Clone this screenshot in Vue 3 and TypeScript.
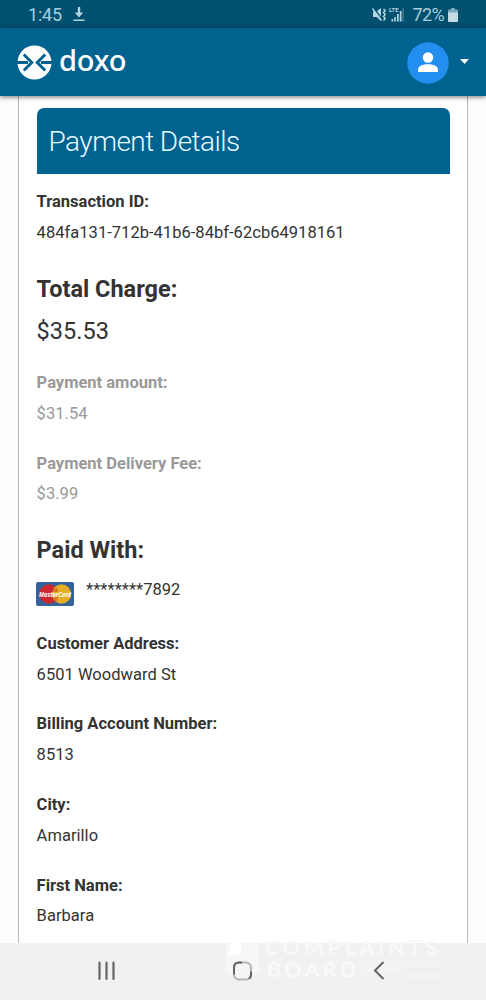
<script setup lang="ts">
interface Field {
  label: string
  value: string
  kind?: 'total' | 'muted' | 'card'
}

const fields: Field[] = [
  { label: 'Transaction ID:', value: '484fa131-712b-41b6-84bf-62cb64918161' },
  { label: 'Total Charge:', value: '$35.53', kind: 'total' },
  { label: 'Payment amount:', value: '$31.54', kind: 'muted' },
  { label: 'Payment Delivery Fee:', value: '$3.99', kind: 'muted' },
  { label: 'Paid With:', value: '********7892', kind: 'card' },
  { label: 'Customer Address:', value: '6501 Woodward St' },
  { label: 'Billing Account Number:', value: '8513' },
  { label: 'City:', value: 'Amarillo' },
  { label: 'First Name:', value: 'Barbara' },
]
</script>

<template>
  <div class="phone">
    <div class="status">
      <span class="time">1:45</span>
      <svg class="download" width="12" height="16" viewBox="0 0 12 16">
        <path d="M4.8 0h2.4v5.500h3L6 10.500 1.800 5.500h3z M0.500 12.500h11V14H.5z" fill="#b6d4e1" />
      </svg>
      <svg class="signals" width="33" height="16" viewBox="0 0 33 16">
        <g fill="#b6d4e1">
          <path d="M1 4.500h3.500L9 1v13l-4.500-4H1z" />
          <path d="M1.500 .5 9.500 11.500" stroke="#00506f" stroke-width="1.300" />
          <path d="M.5 1.500 9.500 13.500" stroke="#b6d4e1" stroke-width="1.300" />
          <path d="M11.500 2l1.700 1.500-1.700 2 1.700 2-1.700 2 1.700 2-1.700 2" fill="none" stroke="#b6d4e1" stroke-width="1.500" />
          <path d="M19.500 12h1.700v2.500h-1.700z M22.200 10h1.700v4.500h-1.700z M25 7h1.700v7.500H25z M27.800 4h1.700v10.500h-1.700z" />
          <path d="M30.500 1.500h1.300v13h-1.300z" opacity=".4" />
          <text x="17" y="5.200" font-size="6" font-weight="700" textLength="9.500" lengthAdjust="spacingAndGlyphs">LTE</text>
        </g>
      </svg>
      <span class="percent">72%</span>
      <svg class="battery" width="10" height="14" viewBox="0 0 10 14">
        <path d="M3 0h4v1.500h2q1 0 1 1V5H0V2.500q0-1 1-1h2z" fill="#78a9bd" />
        <path d="M0 4.500h10V13q0 1-1 1H1q-1 0-1-1z" fill="#c5dce6" />
      </svg>
    </div>

    <header class="navbar">
      <svg class="mark" width="35" height="35" viewBox="0 0 35 35">
        <circle cx="17.500" cy="17.500" r="17" fill="#fff" />
        <g stroke="#00628f" stroke-width="2.900" fill="none">
          <path d="M0 17.500h11M6.800 9.500l8 8-8 8" />
          <path d="M35 17.500H24M28.200 9.500l-8 8 8 8" />
        </g>
      </svg>
      <span class="brand">doxo</span>
      <svg class="avatar" width="42" height="42" viewBox="0 0 42 42">
        <circle cx="21" cy="21" r="20.700" fill="#218ef0" />
        <circle cx="21" cy="15.500" r="5.200" fill="#fff" />
        <path d="M11 30v-2.500c0-3.300 5-5.200 10-5.200s10 1.900 10 5.200V30z" fill="#fff" />
      </svg>
      <svg class="caret" width="9" height="5" viewBox="0 0 9 5"><path d="M0 0h9L4.500 5z" fill="#fff" /></svg>
    </header>

    <main class="page">
      <section class="panel">
        <h1>Payment Details</h1>
        <dl>
          <div v-for="f in fields" :key="f.label" class="field" :class="f.kind">
            <dt>{{ f.label }}</dt>
            <dd>
              <svg v-if="f.kind === 'card'" class="mastercard" width="38" height="24" viewBox="0 0 38 24">
                <rect width="38" height="24" rx="2" fill="#34629b" />
                <circle cx="13" cy="12" r="9.700" fill="#cb2530" />
                <circle cx="25.500" cy="12" r="9.700" fill="#e6ad24" />
                <path d="M17 7h4.500M16 9h6M16 16h6M17 18h4.500" stroke="#cb4a28" stroke-width="1" />
                <text x="3" y="14.500" font-size="7.500" font-weight="700" font-style="italic" fill="#fff" textLength="32" lengthAdjust="spacingAndGlyphs">MasterCard</text>
              </svg>
              <span>{{ f.value }}</span>
            </dd>
          </div>
        </dl>
      </section>
    </main>

    <footer class="softkeys">
      <svg width="486" height="57" viewBox="0 0 486 57">
        <g class="watermark" fill="#f9f9f9">
          <path d="M226 0h33v29l-16 9-17-9z" opacity=".8" />
          <path d="M230 0h11v12h-11z" fill="#fff" />
          <text x="265" y="12" font-size="21" textLength="172">COMPLAINTS</text>
          <text x="267" y="34" font-size="21" textLength="89">BOARD</text>
          <path d="M362 20h75M362 27h40" stroke="#f3f3f3" stroke-width="6" />
          <path d="M411 33h25" stroke="#f8f8f8" stroke-width="3" stroke-dasharray="4 3" />
        </g>
        <path d="M99.500 19.500v16.500M106.500 19.500v16.500M113.500 19.500v16.500" stroke="#666" stroke-width="2.200" stroke-linecap="round" />
        <rect x="234" y="19.500" width="17" height="17" rx="5" fill="#f5f5f5" stroke="#b4b4b4" stroke-width="2" />
        <path d="M234 31.500v-7q0-5 5-5h3M251 28.500v3q0 3-2 4" fill="none" stroke="#626262" stroke-width="2" />
        <path d="M383.500 19 375 27.500l8.500 8.500" fill="none" stroke="#626262" stroke-width="2" />
      </svg>
    </footer>
  </div>
</template>

<style>
body {
  margin: 0;
}
</style>

<style scoped>
.phone {
  width: 486px;
  height: 1000px;
  overflow: hidden;
  display: flex;
  flex-direction: column;
  background: #fdfdfd;
  color: #333;
  font-family: Roboto, sans-serif;
}
.status {
  height: 28px;
  flex: none;
  display: flex;
  align-items: center;
  box-sizing: border-box;
  padding: 1px 28px 0 28px;
  background: #00506f;
  color: #a9cddd;
  font-size: 18px;
}
.time {
  width: 45px;
  letter-spacing: -0.2px;
}
.signals {
  margin-left: auto;
}
.percent {
  margin: 0 4px 0 7px;
  letter-spacing: -0.6px;
}
.navbar {
  position: relative;
  z-index: 1;
  height: 68px;
  flex: none;
  display: flex;
  align-items: center;
  box-sizing: border-box;
  padding: 1px 17.5px 0 17px;
  background: #00628f;
  box-shadow: 0 1px 5px rgba(0, 0, 0, 0.55);
}
.brand {
  margin: -7px 0 0 7px;
  color: #fff;
  font-family: "Noto Sans", sans-serif;
  font-size: 29px;
  font-weight: 500;
  letter-spacing: -0.2px;
}
.avatar {
  margin-left: auto;
}
.caret {
  margin: -2px 0 0 11px;
}
.page {
  flex: 1;
  min-height: 0;
  padding: 0 18px;
  overflow: hidden;
}
.panel {
  height: 100%;
  box-sizing: border-box;
  padding: 12.3px 17px 0 17.6px;
  border: solid #b8b8b8;
  border-width: 0 1px;
  background: #fff;
}
h1 {
  height: 66px;
  margin: 0 0 13px;
  padding-left: 12px;
  border-radius: 7px 7px 0 0;
  background: #00628f;
  color: #e5faff;
  font-size: 28px;
  font-weight: 300;
  letter-spacing: -0.56px;
  line-height: 67px;
}
dl,
dd {
  margin: 0;
}
.field {
  font-size: 16.5px;
  line-height: 30.7px;
  padding-bottom: 19.2px;
}
dt {
  font-weight: 700;
}
dd {
  display: flex;
  letter-spacing: 0.03px;
}
.total {
  font-size: 23.5px;
  line-height: 42px;
  padding-bottom: 16.2px;
}
.muted {
  color: #999;
}
.card dt {
  font-size: 23.5px;
  line-height: 42px;
}
.card dd {
  line-height: 38px;
}
.card {
  padding-bottom: 19.6px;
}
.mastercard {
  margin: 10.5px 12px 0 -0.5px;
}
.mastercard text {
  font-family: "Open Sans", sans-serif;
}
.softkeys {
  height: 57px;
  flex: none;
  background: #f1f1f1;
}
.softkeys svg {
  display: block;
  overflow: visible;
}
.watermark {
  font-family: Lato, sans-serif;
  font-weight: 700;
}
</style>
